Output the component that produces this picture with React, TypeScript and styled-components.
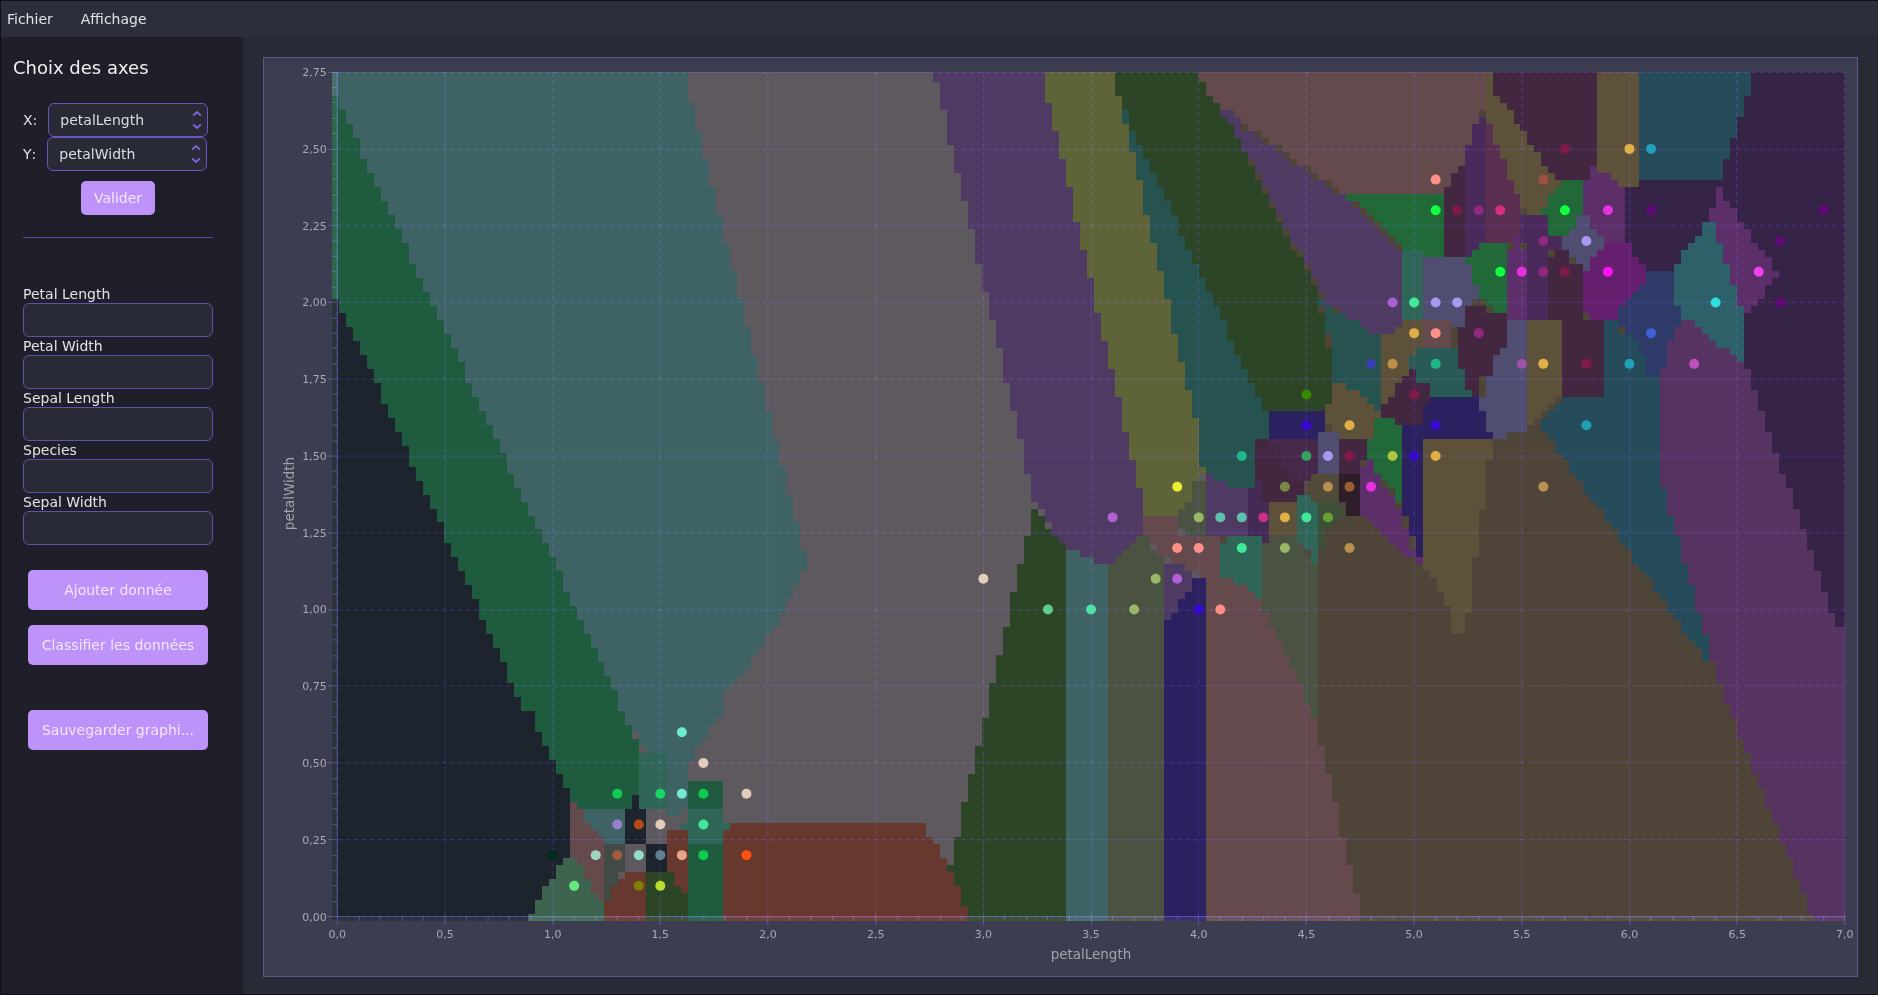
import React from 'react'
import styled, { createGlobalStyle } from 'styled-components'

const GlobalStyle = createGlobalStyle`
  html, body { margin: 0; padding: 0; background: #282a36; }
  * { box-sizing: border-box; }
`

// region colours of the decision map
const GREY = '#5e585f'
const TEAL = '#3f6364'
const GREEN = '#1f5c3f'
const DARK = '#1d242d'
const LGREEN = '#3e6450'
const MAUVE = '#644a4d'
const MTEAL = '#2f6658'
const RED = '#66382e'
const DGREEN = '#2d4527'
const OLIVE = '#5f6338'
const PURPLE = '#4e3a62'
const DTEAL = '#265250'
const BGREEN = '#22693a'
const BOLIVE = '#5d5239'
const DMAUVE = '#432740'
const TBLUE = '#264b5b'
const VDARK = '#352348'
const TEAL2 = '#2d6068'
const BLUE = '#2e3a68'
const MAGENTA = '#64206e'
const VIOLET = '#5c2f6a'
const PLUM = '#4a2a5a'
const SLATE = '#4f4e70'
const NAVY = '#2c2160'
const LILAC = '#563360'
const BROWN = '#4f4438'
const SAGE = '#4a5242'

// expands [x, yEnd, x, yEnd...] into a staircase running down from y
const edge = (y: number, steps: number[]) => {
  const out: number[] = []
  for (let i = 0; i < steps.length; i += 2) {
    out.push(steps[i], y, steps[i], steps[i + 1])
    y = steps[i + 1]
  }
  return out
}

const back = (flat: number[]) => {
  const out: number[] = []
  for (let i = flat.length - 2; i >= 0; i -= 2) out.push(flat[i], flat[i + 1])
  return out
}

const PURPLE_LEFT = edge(72, [933, 82, 940, 110, 947, 145, 954, 173, 961, 201, 968, 229, 975, 264, 982, 292, 989, 320, 996, 348, 1003, 383, 1010, 411, 1017, 439, 1024, 474, 1031, 502, 1038, 509])
const OLIVE_LEFT = edge(72, [1045, 103, 1052, 131, 1059, 159, 1066, 187, 1073, 222, 1080, 250, 1087, 278, 1094, 313, 1101, 341, 1108, 369, 1115, 397, 1122, 432, 1129, 460, 1136, 488, 1143, 516])
const OLIVE_RIGHT = edge(72, [1115, 96, 1122, 124, 1129, 152, 1136, 180, 1143, 215, 1150, 243, 1157, 271, 1164, 299, 1171, 334, 1178, 362, 1185, 390, 1192, 418, 1199, 453, 1206, 474])
const DGREEN_LEFT = edge(72, [1115, 96, 1122, 110, 1129, 131, 1136, 145, 1143, 159, 1150, 173, 1157, 187, 1164, 201, 1171, 215, 1178, 236, 1185, 250, 1192, 264, 1199, 278, 1206, 292, 1213, 306, 1220, 320, 1227, 341, 1234, 355, 1241, 369, 1248, 383, 1255, 397, 1262, 411])
const DGREEN_RIGHT = edge(72, [1199, 82, 1206, 96, 1213, 103, 1220, 117, 1227, 124, 1234, 138, 1241, 152, 1248, 166, 1255, 180, 1262, 194, 1269, 208, 1276, 222, 1283, 236, 1290, 250, 1297, 257, 1304, 271, 1311, 285, 1318, 313, 1325, 348, 1332, 376])
const TBLUE_LOW = edge(432, [1549, 439, 1556, 453, 1563, 460, 1570, 474, 1577, 481, 1584, 495, 1591, 502, 1598, 509, 1605, 523, 1612, 530, 1619, 544, 1626, 551, 1633, 565, 1640, 572, 1647, 579, 1654, 593, 1661, 600, 1668, 614, 1675, 621, 1682, 635, 1689, 642, 1696, 649, 1703, 663])
const LILAC_RIGHT = edge(362, [1745, 369, 1752, 390, 1759, 411, 1766, 432, 1773, 453, 1780, 474, 1787, 488, 1794, 509, 1801, 530, 1808, 551, 1815, 572, 1822, 593, 1829, 614, 1836, 628, 1846, 922])
const LILAC_LEFT = edge(369, [1661, 488, 1668, 516, 1675, 537, 1682, 565, 1689, 586, 1696, 614, 1703, 635, 1710, 663, 1717, 684, 1724, 705, 1731, 719, 1738, 740, 1745, 754, 1752, 775, 1759, 789, 1766, 810, 1773, 824, 1780, 845, 1787, 859, 1794, 880, 1801, 894, 1808, 915, 1815, 922])
const MAUVE_LOW = edge(628, [1276, 642, 1283, 656, 1290, 670, 1297, 684, 1304, 705, 1311, 719, 1318, 747, 1325, 775, 1332, 803, 1339, 838, 1346, 866, 1353, 894, 1360, 922])

// polygons in page pixels, painted in order
const REGIONS: [string, number[]][] = [
  [GREY, [331, 72, 1846, 72, 1846, 922, 331, 922]],
  [BROWN, [1206, 72, 1846, 72, 1846, 922, 1206, 922]],
  [TEAL, [331, 72, ...edge(72, [688, 103, 695, 131, 702, 159, 709, 187, 716, 215, 723, 243, 730, 271, 737, 299, 744, 327, 751, 355, 758, 383, 765, 411, 772, 439, 779, 467, 786, 495, 793, 523, 800, 551, 807, 572, 800, 586, 793, 600, 786, 614, 779, 628, 772, 635, 765, 649, 758, 656, 751, 670, 744, 677, 737, 684, 730, 691, 723, 719, 716, 726, 709, 740, 702, 747, 695, 761, 688, 810]), 674, 824, 667, 810, 667, 760, 646, 754, 639, 738, 331, 300]],
  [GREEN, [331, 96, ...edge(96, [338, 110, 345, 124, 352, 138, 359, 159, 366, 173, 373, 187, 380, 201, 387, 215, 394, 229, 401, 243, 408, 264, 415, 278, 422, 292, 429, 306, 436, 320, 443, 334, 450, 348, 457, 362, 464, 383, 471, 397, 478, 411, 485, 425, 492, 439, 499, 453, 506, 474, 513, 488, 520, 502, 527, 516, 534, 530, 541, 544, 548, 558, 555, 572, 562, 593, 569, 607, 576, 621, 583, 635, 590, 649, 597, 663, 604, 677, 611, 691, 618, 712, 625, 726, 632, 740]), 639, 740, 639, 796, 632, 796, 632, 810, 569, 810, 527, 730, 331, 330]],
  [DARK, [331, 299, ...edge(299, [338, 313, 345, 327, 352, 341, 359, 355]), 362.5, 355, 523.5, 712, ...edge(712, [534, 733, 541, 747, 548, 761, 555, 775, 562, 789, 569, 859]), 562, 866, 555, 873, 548, 887, 541, 894, 534, 908, 527, 922, 331, 922]],
  [MAUVE, [569, 803, 576, 803, 583, 817, 590, 824, 597, 838, 604, 838, 604, 901, 597, 901, 590, 887, 583, 873, 576, 859, 569, 859]],
  [LGREEN, [569, 859, 576, 859, 583, 873, 590, 887, 597, 901, 604, 901, 604, 922, 527, 922, 534, 908, 541, 894, 548, 887, 555, 873, 562, 866]],
  [TEAL, [583, 810, 625, 810, 625, 845, 604, 845, 604, 838, 597, 838, 590, 824, 583, 817]],
  ['#424a46', [604, 845, 625, 845, 625, 873, 618, 873, 618, 887, 611, 887, 611, 901, 604, 901]],
  [DARK, [632, 796, 646, 796, 646, 845, 625, 845, 625, 810, 632, 810]],
  [GREY, [625, 845, 646, 845, 646, 873, 625, 873]],
  [MTEAL, [639, 747, 646, 754, 667, 754, 667, 810, 646, 810, 639, 803]],
  [GREY, [646, 810, 667, 810, 667, 817, 674, 824, 681, 824, 681, 831, 674, 838, 667, 845, 646, 845]],
  [DARK, [646, 845, 667, 845, 667, 873, 646, 873]],
  [RED, [667, 838, 674, 831, 688, 831, 688, 894, 681, 894, 681, 887, 674, 887, 674, 873, 667, 873]],
  [RED, [625, 873, 646, 873, 646, 922, 604, 922, 604, 901, 611, 901, 611, 887, 618, 887, 618, 880, 625, 880]],
  [DGREEN, [646, 873, 674, 873, 674, 887, 681, 887, 681, 894, 688, 894, 688, 908, 695, 908, 695, 922, 646, 922]],
  [GREEN, [688, 845, 723, 845, 723, 922, 688, 922]],
  [GREEN, [688, 782, 723, 782, 723, 810, 688, 810]],
  [MTEAL, [688, 810, 723, 810, 723, 824, 730, 824, 730, 831, 723, 831, 723, 845, 688, 845, 688, 831, 681, 831, 681, 824, 688, 824]],
  [DGREEN, [1031, 509, 1038, 509, 1045, 523, 1059, 537, 1066, 551, 1066, 922, ...back(edge(509, [1031, 537, 1024, 565, 1017, 593, 1010, 628, 1003, 656, 996, 684, 989, 719, 982, 747, 975, 775, 968, 803, 961, 838, 954, 866, 947, 873, 954, 922]))]],
  [RED, [723, 831, 730, 831, 730, 824, ...edge(824, [926, 838, 933, 845, 940, 859, 947, 873, 954, 887, 961, 908, 968, 922]), 723, 922]],
  [PURPLE, [...PURPLE_LEFT, 1045, 509, 1052, 530, 1059, 537, 1066, 551, 1080, 551, 1080, 558, 1094, 558, 1094, 565, 1108, 565, 1108, 572, 1115, 572, 1122, 565, 1129, 558, 1136, 551, 1143, 537, 1143, 516, ...back(OLIVE_LEFT)]],
  [TEAL, [1066, 551, 1080, 551, 1080, 558, 1094, 558, 1094, 565, 1108, 565, 1108, 922, 1066, 922]],
  [DTEAL, [1122, 110, 1129, 110, 1262, 397, 1269, 411, 1269, 453, 1262, 460, 1262, 474, 1255, 481, 1255, 488, 1227, 488, 1227, 481, 1213, 481, 1206, 474, 1199, 453, 1178, 362, 1129, 145]],
  [OLIVE, [...OLIVE_RIGHT, 1199, 474, 1199, 481, 1192, 481, 1192, 502, 1185, 502, 1185, 509, 1178, 509, 1178, 516, ...back(OLIVE_LEFT)]],
  [PURPLE, [1220, 110, 1234, 110, 1241, 124, 1248, 131, 1262, 138, 1269, 145, 1283, 152, 1290, 159, 1297, 166, 1311, 173, 1318, 180, 1332, 187, 1339, 194, 1346, 194, 1402, 250, 1402, 327, 1395, 334, 1374, 334, 1367, 327, 1353, 320, 1346, 313, 1332, 306, 1325, 299, 1318, 285, 1234, 130]],
  [DGREEN, [...DGREEN_RIGHT, 1339, 376, 1332, 383, 1332, 404, 1325, 404, 1325, 411, ...back(DGREEN_LEFT)]],
  [MAUVE, [1486, 72, 1486, 110, 1479, 117, 1472, 138, 1465, 159, 1458, 173, 1451, 180, 1451, 194, 1339, 194, 1339, 187, 1332, 187, 1332, 180, 1318, 180, 1318, 173, 1311, 173, 1311, 166, 1297, 166, 1297, 159, 1290, 159, 1290, 152, 1283, 152, 1283, 145, 1269, 145, 1269, 138, 1262, 138, 1262, 131, 1248, 131, 1248, 124, 1241, 124, 1241, 117, 1234, 117, 1234, 110, 1220, 110, 1220, 103, 1213, 103, 1213, 96, 1206, 96, 1206, 82, 1199, 82, 1199, 72]],
  [BGREEN, [1346, 194, 1444, 194, 1444, 257, 1423, 257, 1423, 250, 1402, 250, 1395, 236, 1388, 229, 1381, 222, 1374, 215, 1367, 208, 1353, 201]],
  [DMAUVE, [1444, 194, 1451, 180, 1458, 173, 1465, 159, 1465, 257, 1444, 257]],
  [PLUM, [1465, 159, 1472, 138, 1479, 117, 1486, 117, 1486, 257, 1465, 257]],
  ['#5a2f4f', [1486, 110, 1493, 110, 1493, 131, 1500, 131, 1500, 152, 1507, 152, 1507, 166, 1514, 166, 1514, 187, 1521, 187, 1521, 243, 1486, 243]],
  [BOLIVE, [1486, 72, 1493, 72, 1493, 89, 1500, 96, 1514, 117, 1528, 138, 1542, 159, 1563, 180, 1563, 187, 1556, 187, 1556, 194, 1549, 194, 1549, 208, 1542, 208, 1542, 215, 1528, 215, 1528, 208, 1521, 201, 1514, 187, 1507, 166, 1500, 152, 1493, 131, 1486, 110]],
  [DMAUVE, [1493, 72, 1598, 72, 1598, 166, 1591, 166, 1591, 180, 1563, 180, 1542, 159, 1514, 117, 1500, 96, 1493, 89]],
  [BOLIVE, [1598, 72, 1640, 72, 1640, 187, 1619, 187, 1619, 180, 1612, 180, 1612, 173, 1598, 173]],
  [TBLUE, [1640, 72, 1752, 72, 1752, 96, 1745, 96, 1745, 117, 1738, 117, 1738, 138, 1731, 138, 1731, 159, 1724, 159, 1724, 180, 1640, 180]],
  [VDARK, [1752, 72, 1846, 72, 1846, 720, 1745, 500, 1745, 313, 1675, 271, 1647, 271, 1647, 264, 1640, 264, 1640, 257, 1633, 257, 1633, 243, 1626, 243, 1626, 187, 1640, 187, 1640, 180, 1724, 180, 1724, 159, 1731, 159, 1731, 138, 1738, 138, 1738, 117, 1745, 117, 1745, 96, 1752, 96]],
  [LILAC, [1661, 369, 1668, 348, 1675, 341, 1682, 320, 1689, 320, 1710, 334, 1724, 348, 1738, 355, 1745, 362, ...LILAC_RIGHT, ...back(LILAC_LEFT)]],
  [VIOLET, [1717, 187, 1724, 187, 1724, 201, 1731, 201, 1731, 208, 1738, 208, 1738, 222, 1745, 222, 1745, 229, 1752, 229, 1752, 243, 1759, 243, 1759, 250, 1766, 250, 1766, 257, 1773, 257, 1773, 271, 1780, 271, 1780, 278, 1773, 278, 1773, 285, 1766, 285, 1766, 299, 1759, 299, 1759, 306, 1752, 306, 1752, 313, 1745, 313, 1738, 306, 1738, 285, 1731, 278, 1731, 264, 1724, 264, 1724, 243, 1717, 243, 1717, 222, 1710, 222, 1710, 208, 1717, 208]],
  [TEAL2, [1703, 222, 1717, 222, 1717, 243, 1724, 243, 1724, 264, 1731, 264, 1731, 285, 1738, 285, 1738, 306, 1745, 306, 1745, 362, 1738, 355, 1724, 348, 1717, 341, 1710, 334, 1689, 320, 1682, 320, 1682, 306, 1675, 306, 1675, 278, 1668, 278, 1668, 271, 1675, 271, 1675, 264, 1682, 264, 1682, 250, 1689, 250, 1689, 243, 1696, 243, 1696, 236, 1703, 236]],
  [BLUE, [1647, 271, 1675, 271, 1675, 306, 1682, 306, 1682, 327, 1675, 327, 1675, 341, 1668, 348, 1668, 369, 1661, 369, 1661, 376, 1654, 376, 1647, 369, 1647, 355, 1640, 348, 1633, 334, 1626, 334, 1626, 327, 1619, 327, 1619, 313, 1626, 306, 1626, 299, 1633, 299, 1640, 285, 1647, 278]],
  [VIOLET, [1591, 166, 1598, 166, 1598, 173, 1612, 173, 1612, 180, 1619, 180, 1619, 187, 1626, 187, 1626, 243, 1605, 243, 1598, 250, 1591, 257, 1584, 264, 1584, 180, 1591, 180]],
  [MAGENTA, [1598, 250, 1605, 243, 1633, 243, 1633, 257, 1640, 257, 1640, 264, 1647, 264, 1647, 285, 1640, 285, 1640, 292, 1633, 292, 1633, 299, 1626, 299, 1626, 306, 1619, 306, 1619, 320, 1591, 320, 1591, 313, 1584, 313, 1584, 271, 1591, 271, 1591, 257, 1598, 257]],
  [BGREEN, [1563, 180, 1584, 180, 1584, 215, 1577, 215, 1577, 229, 1570, 229, 1570, 236, 1556, 236, 1549, 229, 1549, 215, 1542, 215, 1542, 208, 1549, 208, 1549, 194, 1556, 194, 1556, 187, 1563, 187]],
  [PLUM, [1521, 215, 1549, 215, 1549, 229, 1556, 236, 1563, 236, 1563, 250, 1556, 250, 1549, 257, 1549, 320, 1528, 320, 1528, 243, 1521, 243]],
  [VIOLET, [1507, 250, 1514, 250, 1514, 237, 1521, 237, 1521, 250, 1528, 250, 1528, 320, 1507, 320]],
  [DMAUVE, [1549, 257, 1556, 257, 1556, 250, 1570, 250, 1570, 264, 1584, 264, 1584, 320, 1549, 320]],
  [SLATE, [1577, 215, 1591, 215, 1591, 229, 1598, 229, 1598, 236, 1605, 236, 1605, 250, 1598, 250, 1598, 257, 1591, 257, 1591, 271, 1584, 271, 1584, 264, 1577, 264, 1577, 257, 1570, 257, 1570, 250, 1563, 250, 1563, 236, 1570, 236, 1570, 229, 1577, 229]],
  [BGREEN, [1479, 243, 1507, 243, 1507, 313, 1493, 313, 1493, 306, 1486, 306, 1486, 299, 1472, 285, 1472, 264, 1465, 264, 1465, 257, 1472, 257, 1472, 250, 1479, 250]],
  [SLATE, [1423, 257, 1465, 257, 1465, 264, 1472, 264, 1472, 285, 1479, 285, 1479, 299, 1472, 306, 1465, 313, 1465, 327, 1451, 327, 1451, 320, 1423, 320]],
  [MTEAL, [1402, 250, 1423, 250, 1423, 320, 1402, 320]],
  [MAUVE, [1423, 320, 1451, 320, 1451, 348, 1423, 348]],
  [DTEAL, [1318, 292, 1325, 306, 1346, 313, 1353, 320, 1367, 327, 1374, 334, 1381, 334, 1381, 411, 1374, 411, 1367, 397, 1353, 390, 1339, 383, 1332, 376, 1332, 348, 1325, 313]],
  [BOLIVE, [1381, 334, 1395, 334, 1395, 327, 1402, 327, 1402, 320, 1423, 320, 1423, 348, 1416, 355, 1409, 362, 1409, 376, 1402, 376, 1402, 383, 1395, 383, 1395, 397, 1388, 397, 1388, 404, 1381, 404]],
  ['#2a5a55', [1409, 362, 1416, 355, 1423, 348, 1458, 348, 1458, 369, 1465, 369, 1465, 390, 1472, 390, 1472, 397, 1423, 397, 1430, 383, 1423, 383, 1416, 376, 1416, 369, 1409, 369]],
  [DMAUVE, [1465, 313, 1472, 306, 1486, 306, 1486, 313, 1507, 313, 1507, 348, 1493, 355, 1493, 376, 1479, 376, 1479, 397, 1472, 397, 1472, 390, 1465, 390, 1465, 369, 1458, 369, 1458, 327, 1465, 327]],
  [SLATE, [1507, 320, 1528, 320, 1528, 432, 1507, 432, 1507, 439, 1493, 439, 1493, 432, 1486, 432, 1486, 411, 1479, 411, 1479, 397, 1486, 397, 1486, 376, 1493, 376, 1493, 355, 1500, 355, 1507, 348]],
  [BOLIVE, [1528, 320, 1563, 320, 1563, 397, 1556, 404, 1549, 411, 1542, 418, 1535, 425, 1528, 432]],
  [DMAUVE, [1563, 320, 1605, 320, 1605, 397, 1563, 397]],
  [TBLUE, [1605, 320, 1619, 320, 1619, 327, 1626, 334, 1633, 334, 1640, 348, 1647, 355, 1647, 369, 1654, 376, 1661, 376, 1661, 488, 1668, 488, 1668, 516, 1675, 516, 1675, 537, 1682, 537, 1682, 565, 1689, 565, 1689, 586, 1696, 586, 1696, 614, 1703, 614, 1703, 635, 1710, 635, 1710, 663, ...back(TBLUE_LOW), 1542, 432, 1542, 418, 1549, 418, 1549, 411, 1556, 411, 1556, 404, 1563, 404, 1563, 397, 1605, 397]],
  [BOLIVE, [1423, 439, 1493, 439, 1493, 460, 1486, 460, 1486, 509, 1479, 509, 1479, 558, 1472, 558, 1472, 614, 1465, 614, 1465, 635, 1458, 635, 1451, 628, 1451, 614, 1444, 600, 1437, 586, 1430, 572, 1423, 565]],
  [NAVY, [1423, 397, 1479, 397, 1479, 411, 1486, 411, 1486, 432, 1493, 432, 1493, 439, 1423, 439, 1423, 558, 1416, 558, 1416, 537, 1409, 537, 1409, 516, 1402, 516, 1402, 425, 1423, 425]],
  [VIOLET, [1360, 474, 1367, 460, 1374, 460, 1381, 481, 1388, 488, 1395, 502, 1402, 516, 1409, 537, 1416, 558, 1423, 558, 1423, 565, 1409, 558, 1402, 551, 1395, 544, 1388, 537, 1381, 530, 1360, 516]],
  [BGREEN, [1374, 418, 1395, 418, 1395, 425, 1402, 425, 1402, 502, 1395, 502, 1395, 488, 1388, 481, 1381, 474, 1374, 467, 1374, 460, 1367, 460, 1367, 439, 1374, 439]],
  [DMAUVE, [1409, 369, 1416, 369, 1416, 376, 1423, 383, 1430, 383, 1430, 404, 1423, 404, 1423, 425, 1395, 425, 1395, 418, 1381, 418, 1381, 404, 1388, 404, 1388, 397, 1395, 397, 1395, 383, 1402, 383, 1402, 376, 1409, 376]],
  [BOLIVE, [1332, 383, 1346, 383, 1353, 390, 1367, 397, 1374, 404, 1381, 411, 1381, 418, 1374, 418, 1374, 439, 1339, 439, 1339, 432, 1332, 432, 1325, 418, 1325, 404, 1332, 404]],
  [NAVY, [1269, 411, 1325, 411, 1325, 439, 1269, 439]],
  [DTEAL, [1199, 453, 1269, 453, 1269, 481, 1206, 481]],
  [DMAUVE, [1255, 439, 1346, 439, 1346, 502, 1255, 502]],
  ['#2e1e2a', [1339, 474, 1360, 474, 1360, 516, 1346, 516, 1346, 502, 1339, 502]],
  [DMAUVE, [1339, 439, 1367, 439, 1367, 460, 1360, 467, 1360, 474, 1339, 474]],
  [SLATE, [1318, 432, 1339, 432, 1339, 474, 1318, 474]],
  ['#514a3a', [1311, 474, 1339, 474, 1339, 502, 1304, 502, 1304, 481, 1311, 481]],
  ['#45284a', [1269, 439, 1318, 439, 1318, 474, 1311, 474, 1311, 481, 1297, 481, 1297, 474, 1290, 467, 1283, 460, 1276, 446, 1269, 446]],
  [SAGE, [1192, 488, 1199, 481, 1206, 481, 1206, 537, 1185, 537, 1178, 516, 1185, 509, 1192, 502]],
  [SAGE, [1108, 572, 1115, 565, 1122, 558, 1129, 551, 1136, 537, 1150, 537, 1150, 551, 1157, 551, 1157, 558, 1164, 558, 1164, 922, 1108, 922]],
  [SAGE, [1262, 537, 1297, 537, 1304, 551, 1311, 565, 1318, 558, 1318, 747, 1276, 747, 1262, 610]],
  ['#3c5038', [1318, 502, 1339, 502, 1346, 509, 1346, 516, 1339, 523, 1332, 523, 1332, 530, 1325, 537, 1325, 544, 1318, 558]],
  [BOLIVE, [1269, 502, 1297, 502, 1297, 537, 1269, 537]],
  [MTEAL, [1297, 495, 1311, 495, 1311, 502, 1318, 502, 1318, 565, 1311, 565, 1311, 551, 1304, 551, 1304, 544, 1297, 537]],
  ['#452a55', [1248, 488, 1255, 488, 1255, 481, 1262, 481, 1262, 502, 1269, 502, 1269, 544, 1255, 544, 1255, 537, 1248, 537]],
  [PURPLE, [1206, 474, 1213, 474, 1213, 481, 1227, 481, 1227, 488, 1248, 488, 1248, 537, 1227, 537, 1220, 544, 1213, 544, 1213, 537, 1206, 537]],
  [MAUVE, [1143, 516, 1178, 516, 1178, 530, 1185, 537, 1220, 537, 1220, 579, 1234, 579, 1241, 586, 1255, 593, 1262, 610, 1269, 614, 1269, 628, ...MAUVE_LOW, 1206, 922, 1206, 579, 1192, 572, 1185, 565, 1164, 558, 1157, 551, 1150, 537, 1143, 530]],
  [MTEAL, [1227, 537, 1262, 537, 1262, 600, 1255, 600, 1255, 593, 1241, 586, 1234, 579, 1220, 579, 1220, 544, 1227, 544]],
  [PURPLE, [1164, 565, 1185, 565, 1185, 572, 1192, 572, 1192, 593, 1185, 593, 1185, 600, 1178, 600, 1178, 614, 1171, 614, 1171, 621, 1164, 621]],
  [NAVY, [1164, 621, 1171, 621, 1171, 614, 1178, 614, 1178, 600, 1185, 600, 1185, 593, 1192, 593, 1192, 579, 1206, 579, 1206, 922, 1164, 922]],
]

const CELL = 7
const LEFT = 331
const RIGHT = 1846
const TOP = 72
const BOTTOM = 922

function inside(px: number, py: number, poly: number[]) {
  let hit = false
  for (let i = 0, j = poly.length - 2; i < poly.length; j = i, i += 2) {
    const yi = poly[i + 1]
    const yj = poly[j + 1]
    if (yi > py !== yj > py && px < ((poly[j] - poly[i]) * (py - yi)) / (yj - yi) + poly[i]) hit = !hit
  }
  return hit
}

// the classifier paints a coarse grid, so rasterise the regions on that grid
function buildCells() {
  const byColor: Record<string, string> = {}
  for (let b = BOTTOM; b > TOP; b -= CELL) {
    const t = Math.max(TOP, b - CELL)
    const cy = Math.max(TOP + 0.5, b - CELL / 2)
    let runColor = ''
    let runStart = LEFT
    for (let x = LEFT; x <= RIGHT + CELL; x += CELL) {
      let color = ''
      if (x < RIGHT) {
        const cx = Math.min(RIGHT - 0.5, x + CELL / 2)
        for (let r = REGIONS.length - 1; r >= 0; r--) {
          if (inside(cx, cy, REGIONS[r][1])) {
            color = REGIONS[r][0]
            break
          }
        }
      }
      if (color !== runColor) {
        if (runColor) {
          const end = Math.min(x, RIGHT)
          byColor[runColor] = (byColor[runColor] || '') + `M${runStart} ${t}H${end}V${b}H${runStart}Z`
        }
        runColor = color
        runStart = x
      }
    }
  }
  return Object.entries(byColor)
}

const CELLS = buildCells()

const GOLD = '#e0b048'
const TAN = '#b89050'
const SAL = '#ff9088'
const SAGEDOT = '#98b868'
const CREAM = '#e2ccba'
const WINE = '#801a48'
const INDIGO = '#3808d0'
const PERI = '#a898f0'
const LIME = '#10ff40'
const ORCHID = '#902880'
const DEEP = '#600a78'
const CYAN = '#20a0b8'
const MINT = '#40e898'
const AQUA = '#60c0b0'
const JADE = '#20b888'
const PINK = '#e830e0'

const POINTS: [number, number, string][] = [
  [1.0, 0.2, '#012a20'], [1.1, 0.1, '#66e87e'], [1.2, 0.2, '#9ed6c0'], [1.3, 0.2, '#a05a3c'], [1.3, 0.3, '#9580c8'], [1.3, 0.4, '#10cc55'],
  [1.4, 0.1, '#808000'], [1.4, 0.2, '#90e0c8'], [1.4, 0.3, '#b84a16'], [1.5, 0.1, '#b8dd30'], [1.5, 0.2, '#5f8090'], [1.5, 0.3, CREAM], [1.5, 0.4, '#18d868'],
  [1.6, 0.2, '#e8a488'], [1.6, 0.4, '#70ead0'], [1.6, 0.6, '#70ead0'], [1.7, 0.2, '#0ccc50'], [1.7, 0.3, MINT], [1.7, 0.4, '#0ccc50'], [1.7, 0.5, CREAM],
  [1.9, 0.2, '#ff5010'], [1.9, 0.4, CREAM], [3.0, 1.1, CREAM], [3.3, 1.0, '#60cc90'], [3.5, 1.0, '#50e0a8'], [3.6, 1.3, '#b060d0'], [3.7, 1.0, SAGEDOT], [3.8, 1.1, SAGEDOT],
  [3.9, 1.1, '#b060d8'], [3.9, 1.2, SAL], [3.9, 1.4, '#e8f030'], [4.0, 1.0, INDIGO], [4.0, 1.2, SAL], [4.0, 1.3, SAGEDOT], [4.1, 1.0, SAL], [4.1, 1.3, AQUA],
  [4.2, 1.2, MINT], [4.2, 1.3, AQUA], [4.2, 1.5, JADE], [4.3, 1.3, '#c83088'], [4.4, 1.2, SAGEDOT], [4.4, 1.3, GOLD], [4.4, 1.4, '#788840'], [4.5, 1.3, MINT],
  [4.5, 1.5, '#38a060'], [4.5, 1.6, INDIGO], [4.5, 1.7, '#3a8800'], [4.6, 1.3, '#68a038'], [4.6, 1.4, TAN], [4.6, 1.5, PERI], [4.7, 1.2, TAN], [4.7, 1.4, '#986030'],
  [4.7, 1.5, WINE], [4.7, 1.6, GOLD], [4.8, 1.4, PINK], [4.8, 1.8, '#3840b0'], [4.9, 1.5, '#a8c840'], [4.9, 1.8, '#c09048'], [4.9, 2.0, '#a860d0'], [5.0, 1.5, INDIGO],
  [5.0, 1.7, WINE], [5.0, 1.9, GOLD], [5.0, 2.0, MINT], [5.1, 1.5, GOLD], [5.1, 1.6, INDIGO], [5.1, 1.8, JADE], [5.1, 1.9, SAL], [5.1, 2.0, PERI], [5.1, 2.3, LIME],
  [5.1, 2.4, SAL], [5.2, 2.0, PERI], [5.2, 2.3, WINE], [5.3, 1.9, ORCHID], [5.3, 2.3, ORCHID], [5.4, 2.1, LIME], [5.4, 2.3, '#d83080'], [5.5, 1.8, '#a050a8'],
  [5.5, 2.1, PINK], [5.6, 1.4, TAN], [5.6, 1.8, GOLD], [5.6, 2.1, ORCHID], [5.6, 2.2, ORCHID], [5.6, 2.4, '#a05040'], [5.7, 2.1, WINE], [5.7, 2.3, LIME], [5.7, 2.5, WINE],
  [5.8, 1.6, CYAN], [5.8, 1.8, WINE], [5.8, 2.2, PERI], [5.9, 2.1, '#ff10f0'], [5.9, 2.3, PINK], [6.0, 1.8, CYAN], [6.0, 2.5, GOLD], [6.1, 1.9, '#4060d8'], [6.1, 2.3, DEEP],
  [6.1, 2.5, CYAN], [6.3, 1.8, '#c050c0'], [6.4, 2.0, '#30e0e0'], [6.6, 2.1, '#f040f0'], [6.7, 2.0, DEEP], [6.7, 2.2, DEEP], [6.9, 2.3, DEEP],
]

const X0 = 336.5
const X_UNIT = 215.6
const Y0 = 917.5
const Y_UNIT = 307.4

const xOf = (v: number) => X0 + v * X_UNIT
const yOf = (v: number) => Y0 - v * Y_UNIT
const comma = (v: number, digits: number) => v.toFixed(digits).replace('.', ',')

const xMajor = Array.from({ length: 15 }, (_, i) => i * 0.5)
const yMajor = Array.from({ length: 12 }, (_, i) => i * 0.25)
const xMinor = Array.from({ length: 71 }, (_, i) => i * 0.1)
const yMinor = Array.from({ length: 56 }, (_, i) => i * 0.05)

const Window = styled.div`
  width: 1878px;
  height: 995px;
  display: flex;
  flex-direction: column;
  background: #282a36;
  border-top: 1px solid #0f1015;
  border-left: 1px solid #0f1015;
  border-bottom: 1px solid #0f1015;
  font-family: 'DejaVu Sans', sans-serif;
  overflow: hidden;
`

const MenuBar = styled.div`
  height: 36px;
  flex: none;
  display: flex;
  align-items: center;
  gap: 28px;
  padding-left: 6px;
  background: #2c2e3b;
`

const MenuItem = styled.span`
  font-size: 14px;
  color: #e2e2e6;
`

const Body = styled.div`
  flex: 1;
  min-height: 0;
  display: flex;
`

const Sidebar = styled.aside`
  width: 242px;
  flex: none;
  display: flex;
  flex-direction: column;
  background: #1e1f29;
`

const Title = styled.h2`
  margin: 20px 0 0 12px;
  height: 22px;
  line-height: 22px;
  font-size: 18px;
  font-weight: 400;
  color: #f0f0f2;
`

const Controls = styled.div`
  display: flex;
  flex-direction: column;
  padding: 0 30px 0 22px;
`

const AxisRows = styled.div`
  display: flex;
  flex-direction: column;
  margin-top: 24px;
`

const AxisRow = styled.div`
  display: flex;
  align-items: center;
  gap: 11px;
  height: 34px;
`

const AxisLabel = styled.span`
  font-size: 14px;
  font-kerning: none;
  color: #e2e2e6;
`

const Combo = styled.div`
  width: 160px;
  height: 34px;
  display: flex;
  align-items: center;
  justify-content: space-between;
  padding: 0 5px 0 11px;
  background: #282a36;
  border: 1px solid #6a55c0;
  border-radius: 6px;
  font-size: 14px;
  color: #dcdce0;
`

const Arrows = styled.svg`
  width: 10px;
  height: 22px;
  fill: none;
  stroke: #7c66dc;
  stroke-width: 1.8;
`

const Action = styled.button<{ $wide?: boolean; $gap: number }>`
  display: block;
  align-self: center;
  width: ${(p) => (p.$wide ? 180 : 74)}px;
  height: ${(p) => (p.$wide ? 40 : 34)}px;
  margin-top: ${(p) => p.$gap}px;
  padding: 0;
  border: none;
  border-radius: 5px;
  background: #bd93f9;
  color: #f2e6ff;
  font-family: inherit;
  font-size: 14px;
  white-space: nowrap;
`

const Divider = styled.hr`
  width: 190px;
  height: 1px;
  margin: 22px 0 0;
  border: none;
  background: #5b4ea8;
`

const Fields = styled.div`
  display: flex;
  flex-direction: column;
  margin-top: 47px;
`

const FieldLabel = styled.label`
  display: block;
  height: 18px;
  line-height: 18px;
  font-size: 14px;
  color: #e2e2e6;
`

const FieldInput = styled.input`
  display: block;
  width: 190px;
  height: 34px;
  margin: 0;
  background: #282a36;
  border: 1px solid #5f50b4;
  border-radius: 6px;
`

const Main = styled.main`
  flex: 1;
  min-width: 0;
  display: flex;
  padding: 20px 20px 17px 20px;
`

const ChartCard = styled.section`
  flex: 1;
  min-width: 0;
  background: #3c3d50;
  border: 1px solid #565c86;
`

const ChartSvg = styled.svg`
  display: block;
  width: 100%;
  height: 100%;
`

const GridLine = styled.line`
  stroke: rgb(34, 20, 78);
  stroke-width: 1;
  stroke-dasharray: 5 3;
  mix-blend-mode: screen;
`

const AxisMark = styled.line`
  stroke: rgb(44, 40, 110);
  stroke-width: 1;
  mix-blend-mode: screen;
`

const TickLabel = styled.text`
  font-family: 'DejaVu Sans', sans-serif;
  font-size: 11px;
  fill: #a9a9b4;
`

const AxisTitle = styled.text`
  font-family: 'DejaVu Sans', sans-serif;
  font-size: 13.5px;
  fill: #a2a3ad;
`

const Wash = styled.rect`
  fill: rgba(255, 255, 255, 0.07);
`

const fields = ['Petal Length', 'Petal Width', 'Sepal Length', 'Species', 'Sepal Width']

function Spinner() {
  return (
    <Arrows viewBox="0 0 10 22">
      <path d="M1.2 6.5 L5 3 L8.8 6.5" />
      <path d="M1.2 15.5 L5 19 L8.8 15.5" />
    </Arrows>
  )
}

function Chart() {
  return (
    <ChartSvg viewBox="264 58 1593 919">
      {CELLS.map(([color, d]) => (
        <path key={color} d={d} fill={color} shapeRendering="crispEdges" />
      ))}
      <Wash x={LEFT} y={TOP} width={X0 - LEFT} height={BOTTOM - TOP} />
      <Wash x={X0} y={918} width={RIGHT - X0} height={BOTTOM - 918} />
      {xMajor.map((v) => (
        <GridLine key={v} x1={Math.floor(xOf(v)) + 0.5} x2={Math.floor(xOf(v)) + 0.5} y1={TOP} y2={917} />
      ))}
      {yMajor.map((v) => (
        <GridLine key={v} x1={337} x2={RIGHT} y1={Math.floor(yOf(v)) + 0.5} y2={Math.floor(yOf(v)) + 0.5} />
      ))}
      {xMinor.map((v) => (
        <AxisMark key={v} x1={Math.floor(xOf(v)) + 0.5} x2={Math.floor(xOf(v)) + 0.5} y1={917} y2={Math.round(v * 10) % 5 === 0 ? 926 : 922} />
      ))}
      {yMinor.map((v) => (
        <AxisMark key={v} x1={336} x2={Math.round(v * 20) % 5 === 0 ? 327 : 331} y1={Math.floor(yOf(v)) + 0.5} y2={Math.floor(yOf(v)) + 0.5} />
      ))}
      <AxisMark x1={336.5} x2={336.5} y1={TOP} y2={918} />
      <AxisMark x1={336} x2={RIGHT} y1={917.5} y2={917.5} />
      {POINTS.map(([x, y, color]) => (
        <circle key={`${x}-${y}`} cx={xOf(x)} cy={yOf(y)} r={5} fill={color} />
      ))}
      {xMajor.map((v) => (
        <TickLabel key={v} x={xOf(v)} y={939} textAnchor="middle">
          {comma(v, 1)}
        </TickLabel>
      ))}
      {yMajor.map((v) => (
        <TickLabel key={v} x={326} y={yOf(v) + 4} textAnchor="end">
          {comma(v, 2)}
        </TickLabel>
      ))}
      <AxisTitle x={1091} y={960} textAnchor="middle">
        petalLength
      </AxisTitle>
      <AxisTitle transform="translate(293 494) rotate(-90)" textAnchor="middle">
        petalWidth
      </AxisTitle>
    </ChartSvg>
  )
}

export default function App() {
  return (
    <Window>
      <GlobalStyle />
      <MenuBar>
        <MenuItem>Fichier</MenuItem>
        <MenuItem>Affichage</MenuItem>
      </MenuBar>
      <Body>
        <Sidebar>
          <Title>Choix des axes</Title>
          <Controls>
            <AxisRows>
              <AxisRow>
                <AxisLabel>X:</AxisLabel>
                <Combo>
                  petalLength
                  <Spinner />
                </Combo>
              </AxisRow>
              <AxisRow>
                <AxisLabel>Y:</AxisLabel>
                <Combo>
                  petalWidth
                  <Spinner />
                </Combo>
              </AxisRow>
            </AxisRows>
            <Action $gap={10}>Valider</Action>
            <Divider />
            <Fields>
              {fields.map((name) => (
                <div key={name}>
                  <FieldLabel>{name}</FieldLabel>
                  <FieldInput />
                </div>
              ))}
            </Fields>
            <Action $wide $gap={25}>Ajouter donnée</Action>
            <Action $wide $gap={15}>Classifier les données</Action>
            <Action $wide $gap={45}>Sauvegarder graphi...</Action>
          </Controls>
        </Sidebar>
        <Main>
          <ChartCard>
            <Chart />
          </ChartCard>
        </Main>
      </Body>
    </Window>
  )
}
